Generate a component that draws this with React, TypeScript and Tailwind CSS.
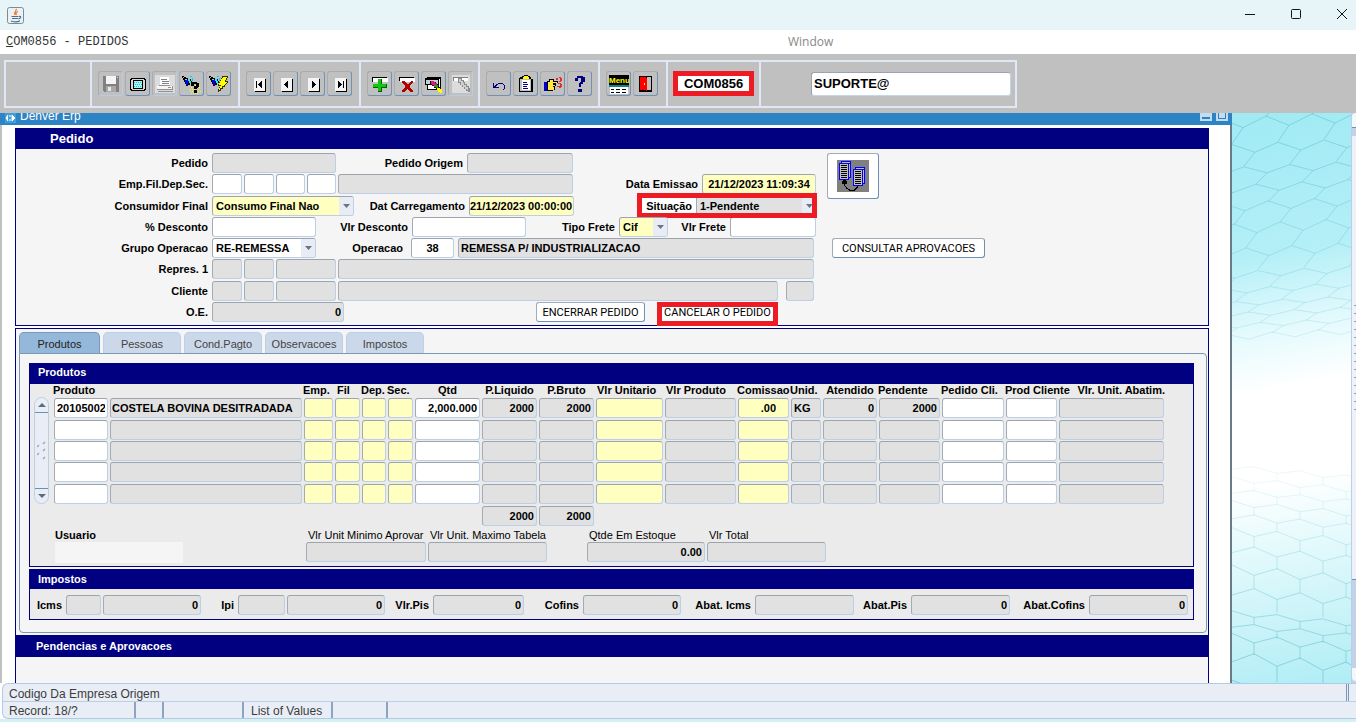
import { useId, useState } from 'react';
import type { ReactNode } from 'react';
import clsx from 'clsx';

type Tone = 'white' | 'gray' | 'yellow';

const tones: Record<Tone, string> = {
  white: 'bg-white',
  gray: 'bg-[#e1e1e1]',
  yellow: 'bg-[#ffffc0]',
};

const fieldBase =
  'h-5 min-w-0 rounded-[3px] border border-t-[#9da4ac] border-l-[#a3abb5] border-r-[#bccfe6] border-b-[#bccfe6] px-[2px] text-[11px] font-bold text-black outline-none';

type FieldProps = {
  label: string;
  id?: string;
  width?: string;
  tone?: Tone;
  value?: string;
  align?: string;
};

const Field = ({ label, id, width = 'w-full', tone = 'gray', value = '', align = '' }: FieldProps) => (
  <input
    id={id}
    aria-label={id ? undefined : label}
    defaultValue={value}
    readOnly={tone === 'gray'}
    className={clsx(fieldBase, tones[tone], width, align)}
  />
);

const Labeled = ({ labelWidth, ...field }: FieldProps & { labelWidth: string }) => {
  const id = useId();
  return (
    <>
      <label htmlFor={id} className={clsx('shrink-0 pr-1 text-right whitespace-nowrap', labelWidth)}>
        {field.label}
      </label>
      <Field {...field} id={id} />
    </>
  );
};

const Picker = ({
  label,
  labelWidth,
  width,
  value,
  tone = 'white',
}: {
  label: string;
  labelWidth: string;
  width: string;
  value: string;
  tone?: Tone;
}) => {
  const id = useId();
  return (
    <>
      <label htmlFor={id} className={clsx('shrink-0 pr-1 text-right whitespace-nowrap', labelWidth)}>
        {label}
      </label>
      <span className={clsx('relative block', width)}>
        <select id={id} className={clsx(fieldBase, 'block w-full appearance-none pl-[3px]', tones[tone])}>
          <option>{value}</option>
        </select>
        <span className="pointer-events-none absolute top-px right-px bottom-px flex w-[14px] items-center justify-center rounded-r-[2px] bg-[#e8edf5]">
          <svg width="7" height="4" viewBox="0 0 7 4">
            <path d="M0 0h7L3.5 4z" fill="#6b7484" />
          </svg>
        </span>
      </span>
    </>
  );
};

const RedFrame = ({ className }: { className: string }) => (
  <span className={clsx('pointer-events-none absolute inset-x-0 border-[5px] border-[#ed1c24]', className)} />
);

const PushButton = ({ children, width }: { children: ReactNode; width: string }) => (
  <button
    type="button"
    className={clsx(
      "block h-5 rounded-[3px] border border-t-[#a3abb5] border-l-[#a3abb5] border-r-[#6f90b3] border-b-[#6f90b3] bg-white pt-[2px] font-['Roboto','Liberation_Sans',sans-serif] text-[11px] leading-[16px] font-normal whitespace-nowrap text-black",
      width,
    )}
  >
    {children}
  </button>
);

const Row = ({ children }: { children: ReactNode }) => <div className="flex h-5 items-center">{children}</div>;

/* ---- toolbar ---- */

const Glyph = ({ children, size = 20 }: { children: ReactNode; size?: number }) => (
  <svg width={size} height={size} viewBox={`0 0 ${size} ${size}`} shapeRendering="crispEdges" aria-hidden="true">
    {children}
  </svg>
);

const Flashlight = () => (
  <>
    <path d="M0 2h2v1h2v1h2v1h3v2h1v2H8v2H6v1H4v-2H3V8H2V6H1V4H0z" fill="#000" />
    <path d="M1 3h1v1H1zM3 5h2v1H3z" fill="#c0c0c0" />
    <path d="M3 6h3v5H4V8H3z" fill="#0000ff" />
    <path d="M6 5h2v2h1v2H7V7H6z" fill="#00ffff" />
    <path d="M8 2h2v1H8zM10 4h1v3h-1z" fill="#00c8ff" />
  </>
);

const RecordPage = ({ children }: { children: ReactNode }) => (
  <>
    <path d="M6 5h11v13H6z" fill="#000" />
    <path d="M5 4h11v13H5z" fill="#f4f4f4" />
    {children}
  </>
);

const toolGroups: { width: string; tools: { name: string; off?: boolean; icon: ReactNode }[] }[] = [
  {
    width: 'w-[148px]',
    tools: [
      {
        name: 'Save',
        off: true,
        icon: (
          <>
            <path d="M2 2h16v16H3v-1H2z" fill="#808080" />
            <path d="M5 2h10v8H5z" fill="#f4f4f4" />
            <path d="M5 12h10v6H5z" fill="#a8a8a8" />
            <path d="M7 13h3v4H7zM16 3h1v1h-1z" fill="#e8e8e8" />
          </>
        ),
      },
      {
        name: 'Screen',
        icon: (
          <>
            <path d="M3 4h14v1h1v11h-1v1H3v-1H2V5h1z" fill="#000" />
            <path d="M4 5h12v1h1v9h-1v1H4v-1H3V6h1z" fill="#d8d8d8" />
            <path d="M5 6h10v9H5z" fill="#000" />
            <path d="M6 7h8v7H6z" fill="#a8f4f4" />
            <path d="M6 8.500h1m1 0h1m1 0h1m1 0h1M7 10.500h1m1 0h1m1 0h1m1 0h1M6 12.500h1m1 0h1m1 0h1m1 0h1" stroke="#30c0c8" />
          </>
        ),
      },
      {
        name: 'Print',
        off: true,
        icon: (
          <>
            <path d="M0 1h20v18H0z" fill="#dcdcdc" />
            <path d="M5 3h9l1 9H5z" fill="#fff" />
            <path d="M6 5.500h6M7 7.500h7M7 9.500h7" stroke="#808080" />
            <path d="M2 12h15v3H2z" fill="#f6f6f6" />
            <path d="M4 11h11v1H4zM2 15h15v1H2zM3 17h15v1H3zM17 12h1v4h-1zM13 13h3v1h-3z" fill="#909090" />
          </>
        ),
      },
      {
        name: 'Enter query',
        icon: (
          <>
            <Flashlight />
            <path
              d="M9 11.500h1m1 0h1m1 0h1m1 0h1m1 0h1M9 13.500h1m7 0h1M8 15.500h1m1 0h1m1 0h1m3 0h1M8 17.500h1m1 0h1m5 0h1m1 0h1M9 19.500h1m1 0h1m1 0h1m1 0h1"
              stroke="#ffff00"
              strokeWidth="1"
            />
            <path d="M10 8h5v1h2v4h-1v1h-1v1h-3v-3h2v-2h-2v2H9V9h1zM12 16h3v3h-3z" fill="#000" />
          </>
        ),
      },
      {
        name: 'Execute query',
        icon: (
          <>
            <Flashlight />
            <path d="M13 2h6v2h-1v2h-1v1h2v2h-1v1h-1v1h-1v2h-2v2h-2v2h-2v1H9v-3h1v-2h1v-1H9v-2h1V8h1V6h1V4h1z" fill="#303000" />
            <path d="M14 3h4v1h-1v2h-1v2h2v1h-1v1h-1v1h-1v1h-2v2h-2v2h-1v-2h1v-2h1v-1h-2V9h1V7h1V5h1z" fill="#ffff00" />
          </>
        ),
      },
    ],
  },
  {
    width: 'w-[121px]',
    tools: [
      { name: 'First', icon: <RecordPage><path d="M7 7h1v7H7zM9 10h1V9h1V8h1V7h1v7h-1v-1h-1v-1h-1v-1H9z" fill="#000" /></RecordPage> },
      { name: 'Previous', icon: <RecordPage><path d="M8 10h1V9h1V8h1V7h1v7h-1v-1h-1v-1H9v-1H8z" fill="#000" /></RecordPage> },
      { name: 'Next', icon: <RecordPage><path d="M13 10h-1V9h-1V8h-1V7H9v7h1v-1h1v-1h1v-1h1z" fill="#000" /></RecordPage> },
      { name: 'Last', icon: <RecordPage><path d="M13 7h1v7h-1zM12 10h-1V9h-1V8H9V7H8v7h1v-1h1v-1h1v-1h1z" fill="#000" /></RecordPage> },
    ],
  },
  {
    width: 'w-[119px]',
    tools: [
      {
        name: 'Insert record',
        icon: (
          <>
            <path d="M2 3h15v5H2z" fill="#000" />
            <path d="M3 4h15v4H3z" fill="#fff" />
            <path d="M8 5h4v5h5v4h-5v4H8v-4H3v-4h5z" fill="#006000" />
            <path d="M8 5h3v5h5v3h-5v4H8v-4H3v-3h5z" fill="#10c810" />
          </>
        ),
      },
      {
        name: 'Remove record',
        icon: (
          <>
            <path d="M2 3h15v4H2z" fill="#000" />
            <path d="M3 4h15v4H3z" fill="#fff" />
            <path d="M5 7h3v1h1v1h1v1h2V9h1V8h1V7h2v2h-1v1h-1v1h-1v3h1v1h1v1h1v2h-3v-1h-1v-1h-1v-1h-1v1H9v1H8v1H5v-2h1v-1h1v-1h1v-3H7v-1H6V9H5z" fill="#b00000" />
          </>
        ),
      },
      {
        name: 'Lock record',
        icon: (
          <>
            <path d="M3 3h14v13H3z" fill="#000" />
            <path d="M4 5h12v10H4z" fill="#fff" />
            <path d="M1 4h14v7H1z" fill="#000" />
            <path d="M2 6h12v4H2z" fill="#b8d8d8" />
            <path d="M6 7h4v1h2v1h1v2h2v2h2v2h1v2h-4v-2h-2v-1h-2v-2H8v-1H6z" fill="#300018" />
            <path d="M7 7h3v1h1v1h2v3h-3v-1H8v-1H7z" fill="#f01080" />
            <path d="M10 11h4v3h-2v-1h-2z" fill="#00b020" />
            <path d="M13 14h3v1h2v4h-2v-1h-2v-2h-1z" fill="#ffff00" />
          </>
        ),
      },
      {
        name: 'Clear record',
        off: true,
        icon: (
          <>
            <path d="M1 1h18v18H1z" fill="#dcdcdc" />
            <path d="M2 3h15v4H2z" fill="#808080" />
            <path d="M3 4h14v3H3z" fill="#fff" />
            <path d="M7 4h4v2h2v2h1v2h2v2h2v2h1v4h-2v-1h-2v-2h-2v-2h-2v-2H9V9H7z" fill="#8c8c8c" />
            <path d="M8 5h2v2h2v2h1v2h2v2h2v3h-1v-1h-2v-2h-2v-2h-2V8H8z" fill="#d0d0d0" />
          </>
        ),
      },
    ],
  },
  {
    width: 'w-[120px]',
    tools: [
      {
        name: 'Undo',
        icon: <path d="M4 9h1v3h1v-1h1v-1h2V9h5v1h1v1h1v4h-1v1h-1v-1h1v-4h-1v-1H9v1H8v1H7v1h3v1H4z" fill="#000080" />,
      },
      {
        name: 'Clipboard',
        icon: (
          <>
            <path d="M4 3h11v2h2v13H3V4h1z" fill="#000" />
            <path d="M4 5h11v12H4z" fill="#c0c0c0" />
            <path d="M6 6h8v10H6z" fill="#fff" />
            <path d="M8 1h4v1h2v3H6V2h2z" fill="#000" />
            <path d="M8 2h4v1h1v2H7V3h1z" fill="#ffff00" />
            <path d="M7 8.500h4M7 10.500h5M7 12.500h4M7 14.500h5" stroke="#000090" />
          </>
        ),
      },
      {
        name: 'Cut',
        icon: (
          <>
            <path d="M1 8h3v9H1z" fill="#0000d0" />
            <path d="M4 7h2V5h5v2h4v2h-2v3h-1v4h-2v1H4z" fill="#000" />
            <path d="M5 8h2V6h3v2h4v1h-4v2h2v1h-2v1h1v3H5z" fill="#ffe840" />
            <path d="M13 4h2v2h-2zM16 3h2v1h1v3h-1v1h-2V7h1V4h-1zM15 9h3v1h1v3h-1v1h-2v-1h-2v-1h3v-2h-2z" fill="#e03030" />
          </>
        ),
      },
      {
        name: 'Help',
        icon: <path d="M7 2h6v1h2v5h-2v2h-2v3H9v-4h1V8h1V4H8v3H5V4h2zM8 15h4v3H8z" fill="#000080" />,
      },
    ],
  },
];

const ToolButton = ({ name, off, children }: { name: string; off?: boolean; children: ReactNode }) => (
  <button
    type="button"
    aria-label={name}
    disabled={off}
    className={clsx(
      'flex h-[25px] w-[25px] items-center justify-center rounded-[3px] border border-t-[#a8abb0] border-l-[#a8abb0]',
      off ? 'border-r-[#bccbe0] border-b-[#bccbe0]' : 'border-r-[#7090b4] border-b-[#7090b4]',
    )}
  >
    <Glyph>{children}</Glyph>
  </button>
);

const Toolbar = () => (
  <div className="flex h-[59px] items-center bg-[#c0c0c0] pr-4 pl-1">
    <div className="flex h-12 items-stretch divide-x-2 divide-[#dfe8f4] border-2 border-[#dfe8f4]">
      <div className="w-[86px]" />
      {toolGroups.map((group, i) => (
        <div key={i} className={clsx('flex items-center gap-[2px] pl-[6px]', group.width)}>
          {group.tools.map((tool) => (
            <ToolButton key={tool.name} name={tool.name} off={tool.off}>
              {tool.icon}
            </ToolButton>
          ))}
        </div>
      ))}
      <div className="flex w-[68px] items-center gap-[2px] pl-[6px]">
        <ToolButton name="Menu">
          <path d="M0 1h20v10H0z" fill="#000" />
          <text x="0" y="9" fontSize="8" fontWeight="700" fontFamily="Liberation Sans, sans-serif" fill="#ffff00">
            Menu
          </text>
          <path d="M0 11h20v2H0z" fill="#108080" />
          <path d="M1 13h18v7H1z" fill="#fff" />
          <path d="M2 15.500h3m2 0h4m2 0h4M2 18.500h3m2 0h4m2 0h4" stroke="#000" />
        </ToolButton>
        <ToolButton name="Exit">
          <path d="M3 2h13v16H3z" fill="#000" />
          <path d="M11 3h4v13h-4z" fill="#c0c0c0" />
          <path d="M4 3h6l1 2v12l-2-1H4z" fill="#ff0000" />
          <path d="M8 9h1v2H8z" fill="#ffff00" />
        </ToolButton>
      </div>
      <div className="flex w-[93px] items-center justify-center">
        <output className="flex h-[25px] w-[81px] items-center justify-center border-[5px] border-[#ed1c24] bg-white text-[13px] font-bold">
          COM0856
        </output>
      </div>
      <div className="flex w-[254px] items-center pl-[50px]">
        <input
          aria-label="Usuario conectado"
          defaultValue="SUPORTE@"
          className="h-6 w-[200px] rounded-[3px] border border-t-[#9aa4b0] border-l-[#9aa4b0] border-r-[#c5d5e8] border-b-[#c5d5e8] bg-white px-[2px] text-[13px] font-bold outline-none"
        />
      </div>
    </div>
  </div>
);

/* ---- order header ---- */

const PedidoForm = () => (
  <section className="border border-t-0 border-[#000080] bg-[#f5f5f5]">
    <h2 className="h-[21px] bg-[#000080] pl-[34px] text-[13px] leading-[21px] font-bold text-white">Pedido</h2>
    <div className="flex pt-1 pb-[3px] font-bold">
      <div className="flex h-[169px] flex-col justify-between">
        <Row>
          <Labeled label="Pedido" labelWidth="w-[196px]" width="w-[124px]" />
          <Labeled label="Pedido Origem" labelWidth="w-[131px]" width="w-[106px]" />
        </Row>
        <Row>
          <Labeled label="Emp.Fil.Dep.Sec." labelWidth="w-[196px]" width="w-[30px]" tone="white" />
          <div className="ml-[2px] flex gap-[2px]">
            <Field label="Filial" width="w-[30px]" tone="white" />
            <Field label="Deposito" width="w-[29px]" tone="white" />
            <Field label="Secao" width="w-[29px]" tone="white" />
            <Field label="Descricao da empresa" width="w-[235px]" />
          </div>
          <Labeled label="Data Emissao" labelWidth="w-[129px]" width="w-[114px]" tone="yellow" value="21/12/2023 11:09:34" align="text-center" />
        </Row>
        <Row>
          <Picker label="Consumidor Final" labelWidth="w-[196px]" width="w-[142px]" tone="yellow" value="Consumo Final Nao" />
          <Labeled label="Dat Carregamento" labelWidth="w-[115px]" width="w-[105px]" tone="yellow" value="21/12/2023 00:00:00" align="pl-0 pr-0" />
          <div className="relative ml-[63px] flex h-5 items-center bg-white">
            <Picker label="Situação" labelWidth="w-[59px]" width="w-[121px]" tone="gray" value="1-Pendente" />
            <RedFrame className="-top-[3px] -bottom-[2px]" />
          </div>
        </Row>
        <Row>
          <Labeled label="% Desconto" labelWidth="w-[196px]" width="w-[104px]" tone="white" />
          <Labeled label="Vlr Desconto" labelWidth="w-[96px]" width="w-[114px]" tone="white" />
          <Picker label="Tipo Frete" labelWidth="w-[93px]" width="w-[49px]" tone="yellow" value="Cif" />
          <Labeled label="Vlr Frete" labelWidth="w-[62px]" width="w-[86px]" tone="white" />
        </Row>
        <Row>
          <Picker label="Grupo Operacao" labelWidth="w-[196px]" width="w-[104px]" value="RE-REMESSA" />
          <Labeled label="Operacao" labelWidth="w-[91px]" width="ml-1 w-[43px]" tone="white" value="38" align="text-center" />
          <Field label="Descricao da operacao" width="ml-1 w-[356px]" value="REMESSA P/ INDUSTRIALIZACAO" />
        </Row>
        <Row>
          <Labeled label="Repres. 1" labelWidth="w-[196px]" width="w-[30px]" />
          <div className="ml-[2px] flex gap-[2px]">
            <Field label="Filial do representante" width="w-[30px]" />
            <Field label="Codigo do representante" width="w-[60px]" />
            <Field label="Nome do representante" width="w-[476px]" />
          </div>
        </Row>
        <Row>
          <Labeled label="Cliente" labelWidth="w-[196px]" width="w-[30px]" />
          <div className="ml-[2px] flex gap-[2px]">
            <Field label="Filial do cliente" width="w-[30px]" />
            <Field label="Codigo do cliente" width="w-[60px]" />
            <Field label="Nome do cliente" width="w-[440px]" />
          </div>
          <Field label="UF do cliente" width="ml-2 w-[28px]" />
        </Row>
        <Row>
          <Labeled label="O.E." labelWidth="w-[196px]" width="w-[132px]" value="0" align="text-right" />
          <div className="ml-48 flex gap-3">
            <PushButton width="w-[109px]">ENCERRAR PEDIDO</PushButton>
            <div className="relative">
              <PushButton width="w-[121px]">CANCELAR O PEDIDO</PushButton>
              <RedFrame className="top-0 -bottom-1" />
            </div>
          </div>
        </Row>
      </div>
      <div className="ml-[10px]">
        <button
          type="button"
          aria-label="Duplicar pedido"
          className="flex h-[46px] w-[52px] items-center justify-center rounded-[3px] border border-t-[#a3abb5] border-l-[#a3abb5] border-r-[#6f90b3] border-b-[#6f90b3] bg-white"
        >
          <Glyph size={32}>
            <path d="M0 0h32v32H0z" fill="#808080" />
            <path d="M4 1h10v17h-2v2H2V3h2z" fill="#0000ff" />
            <path d="M3 4h8v15H3zM5 2h8v1H5zM12 4h1v13h-1z" fill="#c0c0c0" />
            <path d="M4 5.500h6M4 7.500h6M4 9.500h6M4 11.500h6M4 13.500h6M4 15.500h6M4 17.500h6" stroke="#000" />
            <path d="M18 7h10v17h-2v2H16V9h2z" fill="#0000ff" />
            <path d="M17 10h8v15h-8zM19 8h8v1h-8zM26 10h1v13h-1z" fill="#c0c0c0" />
            <path d="M18 11.500h6M18 13.500h6M18 15.500h6M18 17.500h6M18 19.500h6M18 21.500h6M18 23.500h6" stroke="#000" />
            <path d="M7.500 22v3l2 3 3 2h5l3-3 1-2" fill="none" stroke="#000" />
            <path d="M7 19l3 3v2H5v-2z" fill="#000" />
          </Glyph>
        </button>
        <div className="mt-[39px] ml-[5px]">
          <PushButton width="w-[153px]">CONSULTAR APROVACOES</PushButton>
        </div>
      </div>
    </div>
  </section>
);

/* ---- product grid ---- */

type Column = { title: string; field: string; col: string; tone: Tone; value?: string; head?: string; align?: string };

const columns: Column[] = [
  { title: 'Produto', field: 'Produto', col: 'w-14', tone: 'white', value: '20105002', align: 'text-right' },
  { title: '', field: 'Descricao', col: 'w-[194px]', tone: 'gray', value: 'COSTELA BOVINA DESITRADADA', align: 'pl-px' },
  { title: 'Emp.', field: 'Emp.', col: 'w-[31px]', tone: 'yellow' },
  { title: 'Fil', field: 'Fil', col: 'w-[27px]', tone: 'yellow', head: 'pl-[3px] text-left' },
  { title: 'Dep.', field: 'Dep.', col: 'w-[26px]', tone: 'yellow' },
  { title: 'Sec.', field: 'Sec.', col: 'w-[27px]', tone: 'yellow' },
  { title: 'Qtd', field: 'Qtd', col: 'w-[67px]', tone: 'white', value: '2,000.000', head: 'text-center', align: 'text-right' },
  { title: 'P.Liquido', field: 'P.Liquido', col: 'w-[57px]', tone: 'gray', value: '2000', head: 'text-center', align: 'text-right' },
  { title: 'P.Bruto', field: 'P.Bruto', col: 'w-[57px]', tone: 'gray', value: '2000', head: 'text-center', align: 'text-right' },
  { title: 'Vlr Unitario', field: 'Vlr Unitario', col: 'w-[69px]', tone: 'yellow', head: 'text-left pl-[2px]' },
  { title: 'Vlr Produto', field: 'Vlr Produto', col: 'w-[73px]', tone: 'gray', head: 'text-left pl-[2px]' },
  { title: 'Comissao', field: 'Comissao', col: 'w-[53px]', tone: 'yellow', value: '.00', head: 'pr-px text-right', align: 'pr-3 text-right' },
  { title: 'Unid.', field: 'Unid.', col: 'w-8', tone: 'gray', value: 'KG' },
  { title: 'Atendido', field: 'Atendido', col: 'w-14', tone: 'gray', value: '0', head: 'text-center', align: 'text-right' },
  { title: 'Pendente', field: 'Pendente', col: 'w-[63px]', tone: 'gray', value: '2000', align: 'text-right' },
  { title: 'Pedido Cli.', field: 'Pedido Cli.', col: 'w-16', tone: 'white' },
  { title: 'Prod Cliente', field: 'Prod Cliente', col: 'w-[53px]', tone: 'white' },
  { title: 'Vlr. Unit. Abatim.', field: 'Vlr. Unit. Abatim.', col: 'w-[107px]', tone: 'gray', head: 'text-right' },
];

const GridScroll = () => (
  <div className="mt-[13px] flex h-[107px] w-[15px] shrink-0 flex-col rounded-full border border-[#bccfe6] bg-[#e9eef6]">
    <button type="button" aria-label="Rolar para cima" className="flex h-[15px] items-center justify-center border-b border-[#6f90b3]">
      <svg width="8" height="4" viewBox="0 0 8 4">
        <path d="M0 4h8L4 0z" fill="#5d6b7e" />
      </svg>
    </button>
    <div className="flex flex-1 items-center justify-center">
      <svg width="9" height="20" viewBox="0 0 9 20" stroke="#94aac4" strokeWidth="1.500">
        <path d="M0 6l2-2M0 14l2-2M6 3l2-2M6 10l2-2M6 18l2-2" />
      </svg>
    </div>
    <button type="button" aria-label="Rolar para baixo" className="flex h-[15px] items-center justify-center border-t border-[#6f90b3]">
      <svg width="8" height="4" viewBox="0 0 8 4">
        <path d="M0 0h8L4 4z" fill="#5d6b7e" />
      </svg>
    </button>
  </div>
);

const Stacked = ({ label, width, value }: { label: string; width: string; value?: string }) => {
  const id = useId();
  return (
    <div className={width}>
      <label htmlFor={id} className="block h-[13px] pl-[2px] leading-[13px] whitespace-nowrap">
        {label}
      </label>
      <Field id={id} label={label} value={value} align="text-right" />
    </div>
  );
};

const ProductGrid = () => (
  <section className="border border-t-0 border-[#000080] bg-[#ebebeb] pb-[3px]">
    <h3 className="h-[21px] bg-[#000080] pl-2 leading-[19px] font-bold text-white">Produtos</h3>
    <div className="flex pl-1">
      <GridScroll />
      <table className="ml-[4px] w-[1112px] table-fixed border-separate border-spacing-0">
        <colgroup>
          {columns.map((c) => (
            <col key={c.field} className={c.col} />
          ))}
        </colgroup>
        <thead>
          <tr className="h-[14px]">
            {columns.map((c) => (
              <th
                key={c.field}
                scope="col"
                className={clsx('p-0 align-top leading-[12px] font-bold whitespace-nowrap', c.head ?? 'text-left')}
              >
                {c.title}
              </th>
            ))}
          </tr>
        </thead>
        <tbody>
          {[0, 1, 2, 3, 4].map((i) => (
            <tr key={i} className={i % 3 === 0 ? 'h-[22px]' : 'h-[21px]'}>
              {columns.map((c) => (
                <td key={c.field} className="px-px py-0 align-top">
                  <span className="flex">
                    <Field label={`${c.field} ${i + 1}`} tone={c.tone} value={i === 0 ? c.value : ''} align={c.align} />
                  </span>
                </td>
              ))}
            </tr>
          ))}
        </tbody>
        <tfoot>
          <tr className="h-[21px]">
            <td colSpan={7} />
            <td className="px-px py-0">
              <span className="flex">
                <Field label="Total P.Liquido" value="2000" align="text-right" />
              </span>
            </td>
            <td className="px-px py-0">
              <span className="flex">
                <Field label="Total P.Bruto" value="2000" align="text-right" />
              </span>
            </td>
            <td colSpan={9} />
          </tr>
        </tfoot>
      </table>
    </div>
    <div className="mt-[3px] flex pl-[25px]">
      <div className="w-[128px]">
        <div className="h-[13px] leading-[13px] font-bold">Usuario</div>
        <div className="h-[21px] bg-[#f5f5f5]" />
      </div>
      <div className="ml-[123px] flex gap-[2px]">
        <Stacked label="Vlr Unit Minimo Aprovar" width="w-[120px]" />
        <Stacked label="Vlr Unit. Maximo Tabela" width="w-[119px]" />
      </div>
      <div className="ml-10 flex gap-[2px]">
        <Stacked label="Qtde Em Estoque" width="w-[118px]" value="0.00" />
        <Stacked label="Vlr Total" width="w-[119px]" />
      </div>
    </div>
  </section>
);

const Taxes = () => (
  <section className="border border-t-0 border-[#000080] bg-[#ebebeb]">
    <h3 className="h-5 bg-[#000080] pl-2 leading-5 font-bold text-white">Impostos</h3>
    <div className="flex items-center pt-[6px] pb-1 font-bold">
      <Labeled label="Icms" labelWidth="w-9" width="w-[35px]" />
      <Field label="Valor Icms" width="ml-[2px] w-[98px]" value="0" align="text-right" />
      <Labeled label="Ipi" labelWidth="w-[37px]" width="w-[47px]" />
      <Field label="Valor Ipi" width="ml-[2px] w-[98px]" value="0" align="text-right" />
      <Labeled label="Vlr.Pis" labelWidth="w-12" width="w-[91px]" value="0" align="text-right" />
      <Labeled label="Cofins" labelWidth="w-[59px]" width="w-[98px]" value="0" align="text-right" />
      <Labeled label="Abat. Icms" labelWidth="w-[74px]" width="w-[99px]" />
      <Labeled label="Abat.Pis" labelWidth="w-[57px]" width="w-[99px]" value="0" align="text-right" />
      <Labeled label="Abat.Cofins" labelWidth="w-[79px]" width="w-[99px]" value="0" align="text-right" />
    </div>
  </section>
);

const tabs = ['Produtos', 'Pessoas', 'Cond.Pagto', 'Observacoes', 'Impostos'];

const Details = () => {
  const [active, setActive] = useState('Produtos');
  return (
    <section className="mt-[2px] flex flex-1 flex-col border border-b-0 border-[#000080] bg-[#f5f5f5]">
      <div role="tablist" className="flex gap-[3px] pt-[3px] pl-[3px]">
        {tabs.map((tab) => (
          <button
            key={tab}
            type="button"
            role="tab"
            aria-selected={tab === active}
            onClick={() => setActive(tab)}
            className={clsx(
              'h-[21px] rounded-t-[5px] border border-b-0 pt-[2px] text-center leading-[18px]',
              tab === active
                ? 'w-[81px] border-[#7a98b8] bg-[#94b8d9] text-[#222]'
                : 'w-[78px] border-[#bccfe6] bg-[#cbd8e9] text-[#444]',
            )}
          >
            {tab}
          </button>
        ))}
      </div>
      <div role="tabpanel" className="mr-px ml-[3px] rounded-b-[4px] rounded-tr-[4px] border border-[#7a98b8] pt-[9px] pr-3 pb-3 pl-[9px]">
        <ProductGrid />
        <div className="h-[2px]" />
        <Taxes />
      </div>
      <h2 className="mt-[2px] h-[22px] bg-[#000080] pl-5 leading-[22px] font-bold text-white">Pendencias e Aprovacoes</h2>
    </section>
  );
};

/* ---- desktop behind the window ---- */

// Zigzag rows joined by slanted connectors; rows tighten towards the white middle band.
const mesh = (rows: number[], lean: number, tilt: number) =>
  rows.map((y, k) => {
    const next = rows[k + 1];
    const amp = next ? (next - y) / 5 : 3;
    const start = -70 + (k % 2) * 23 + k * lean;
    const points = Array.from({ length: 16 }, (_, j) => {
      const x = start + j * 23;
      return { x, y: y + (j % 2 ? amp : -amp) + x * tilt };
    });
    const zigzag = 'M' + points.map((p) => `${p.x} ${p.y}`).join('L');
    const joins = next
      ? points.filter((_, j) => j % 2).map((p) => `M${p.x} ${p.y}L${p.x + lean} ${next - amp + (p.x + lean) * tilt}`).join('')
      : '';
    return { y, d: zigzag + joins };
  });

const upper = mesh([-14, 10, 36, 58, 76, 94, 116, 140, 162, 178, 191, 202, 213, 224], -11, -0.05);
const lower = mesh([354, 366, 378, 390, 403, 418, 436, 456, 478, 500, 512, 524, 544, 570], 0, 0.09);

const Backdrop = () => (
  <div className="w-[119px] shrink-0 overflow-hidden bg-[linear-gradient(170deg,#a0eaf4_0%,#b4eff7_25%,#e4fafd_38%,#ffffff_48%,#ffffff_64%,#e6fafc_74%,#b0edf5_100%)]">
    <svg width="119" height="570" viewBox="0 0 119 570" fill="none" stroke="#62bccb" aria-hidden="true">
      {upper.map((line) => (
        <path key={line.y} d={line.d} strokeOpacity={0.55 - line.y / 640} />
      ))}
      {lower.map((line) => (
        <path key={line.y} d={line.d} strokeOpacity={Math.max(0.12, (line.y - 320) / 400)} />
      ))}
    </svg>
  </div>
);

const EdgeScroll = () => (
  <div className="flex w-[5px] shrink-0 flex-col overflow-hidden border-l border-[#bccfe6] bg-[#c3d2e7]">
    <div className="h-[15px] rounded-tl-[4px] border-b border-[#6f90b3] bg-[#f4f7fb]" />
    <div className="mt-2 flex flex-1 flex-col justify-center gap-[7px] border-b border-[#6f90b3] bg-[#eef2f8] pl-[2px]">
      {Array.from({ length: 14 }, (_, i) => (
        <span key={i} className="h-px bg-[#8ea5c0]" />
      ))}
    </div>
    <div className="h-[88px]" />
    <div className="mb-[2px] h-[13px] rounded-bl-[4px] bg-[#f4f7fb]" />
  </div>
);

const StatusBar = () => (
  <footer className="ml-[2px] rounded-l-[6px] border border-r-0 border-[#b4cae3] bg-[#e9eef6] text-[12px] text-[#3c3c3c]">
    <div className="flex h-[18px] justify-between border-b border-[#bccfe6] pl-[6px] leading-[20px]">
      <span>Codigo Da Empresa Origem</span>
      <span className="mr-[7px] w-[3px] border-x border-[#7a98b8]" />
    </div>
    <div className="flex h-[16px] pl-[6px] leading-[18px]">
      <span className="w-[127px] border-r-2 border-[#8ba5c2]">Record: 18/?</span>
      <span className="w-7 border-r-2 border-[#8ba5c2]" />
      <span className="w-20 border-r-2 border-[#8ba5c2]" />
      <span className="w-[89px] border-r-2 border-[#8ba5c2] pl-[7px]">List of Values</span>
      <span className="w-[55px] border-r-2 border-[#8ba5c2]" />
    </div>
  </footer>
);

const TitleBar = () => (
  <header className="flex h-[30px] items-center justify-between bg-[#e7f5f8] pr-2 pl-[7px]">
    <svg width="17" height="17" viewBox="0 0 17 17" fill="none" aria-hidden="true">
      <rect x=".5" y=".5" width="16" height="16" rx="2" fill="#eef1f4" stroke="#7c8b99" />
      <path d="M9 2c1.500 2-3 3-1 6M11 4.500C8.500 5.500 8.500 6.500 9.500 8" stroke="#e8792b" strokeWidth="1.300" />
      <path d="M4.500 9.500h7M5 11.500h6M4 14c3 1 7 1 9-.3M12 9.500c2.500-.5 2 2-.5 2.300" stroke="#4a7190" strokeWidth="1.200" />
    </svg>
    <div className="flex gap-[34px]">
      <button type="button" aria-label="Minimizar">
        <svg width="12" height="12" viewBox="0 0 12 12" stroke="#111"><path d="M1 5.500h10" /></svg>
      </button>
      <button type="button" aria-label="Maximizar">
        <svg width="12" height="12" viewBox="0 0 12 12" fill="none" stroke="#111"><rect x="1.500" y=".5" width="9" height="9" rx="1" /></svg>
      </button>
      <button type="button" aria-label="Fechar">
        <svg width="12" height="12" viewBox="0 0 12 12" stroke="#111"><path d="M1 0l10 10M11 0L1 10" /></svg>
      </button>
    </div>
  </header>
);

export default function App() {
  return (
    <div className="flex min-h-screen flex-col bg-white font-['Liberation_Sans',Arial,sans-serif] text-[11px] leading-[14px] text-black">
      <TitleBar />
      <nav className="flex h-6 items-center">
        <button type="button" className="w-[782px] pl-[6px] text-left font-['Liberation_Mono',monospace] text-[12px] text-[#333]">
          <u>C</u>OM0856 - PEDIDOS
        </button>
        <button type="button" className="pl-[6px] font-['Open_Sans','Liberation_Sans',sans-serif] text-[12px] text-[#888]">
          Window
        </button>
      </nav>
      <Toolbar />
      <div className="flex flex-1">
        <main className="flex min-w-0 flex-1 flex-col">
          <div className="flex h-3 items-end justify-between overflow-hidden bg-[#2c84c5] pr-1 pl-[5px]">
            <div className="flex items-end gap-1">
              <svg width="11" height="12" viewBox="0 0 11 12" aria-hidden="true">
                <path d="M0 0h11v10H0z" fill="#3f9fd8" />
                <path d="M3 2L1 5l2 3M7 2l3 3-3 3zM4 3h2M4 7h2" fill="#fff" stroke="#fff" />
              </svg>
              <h1 className="pb-[2px] text-[12px] leading-[14px] text-white">Denver Erp</h1>
            </div>
            <div className="flex gap-1 pb-1">
              <button type="button" aria-label="Minimizar janela" className="flex h-[10px] w-3 items-end justify-center bg-[#c3dcf0] pb-[2px]">
                <span className="h-[2px] w-2 bg-[#2c84c5]" />
              </button>
              <button type="button" aria-label="Maximizar janela" className="flex h-[10px] w-3 items-end justify-center bg-[#c3dcf0] pb-[2px]">
                <span className="h-[7px] w-2 border border-[#2c84c5]" />
              </button>
            </div>
          </div>
          <div className="flex flex-1 flex-col border-r-2 border-l-2 border-r-[#6c7a88] border-l-[#c0c0c0] bg-white pt-[3px] pr-[21px] pl-[13px]">
            <PedidoForm />
            <Details />
          </div>
        </main>
        <Backdrop />
        <EdgeScroll />
      </div>
      <StatusBar />
      <div className="h-[3px] bg-[#d5f0f3]" />
    </div>
  );
}
